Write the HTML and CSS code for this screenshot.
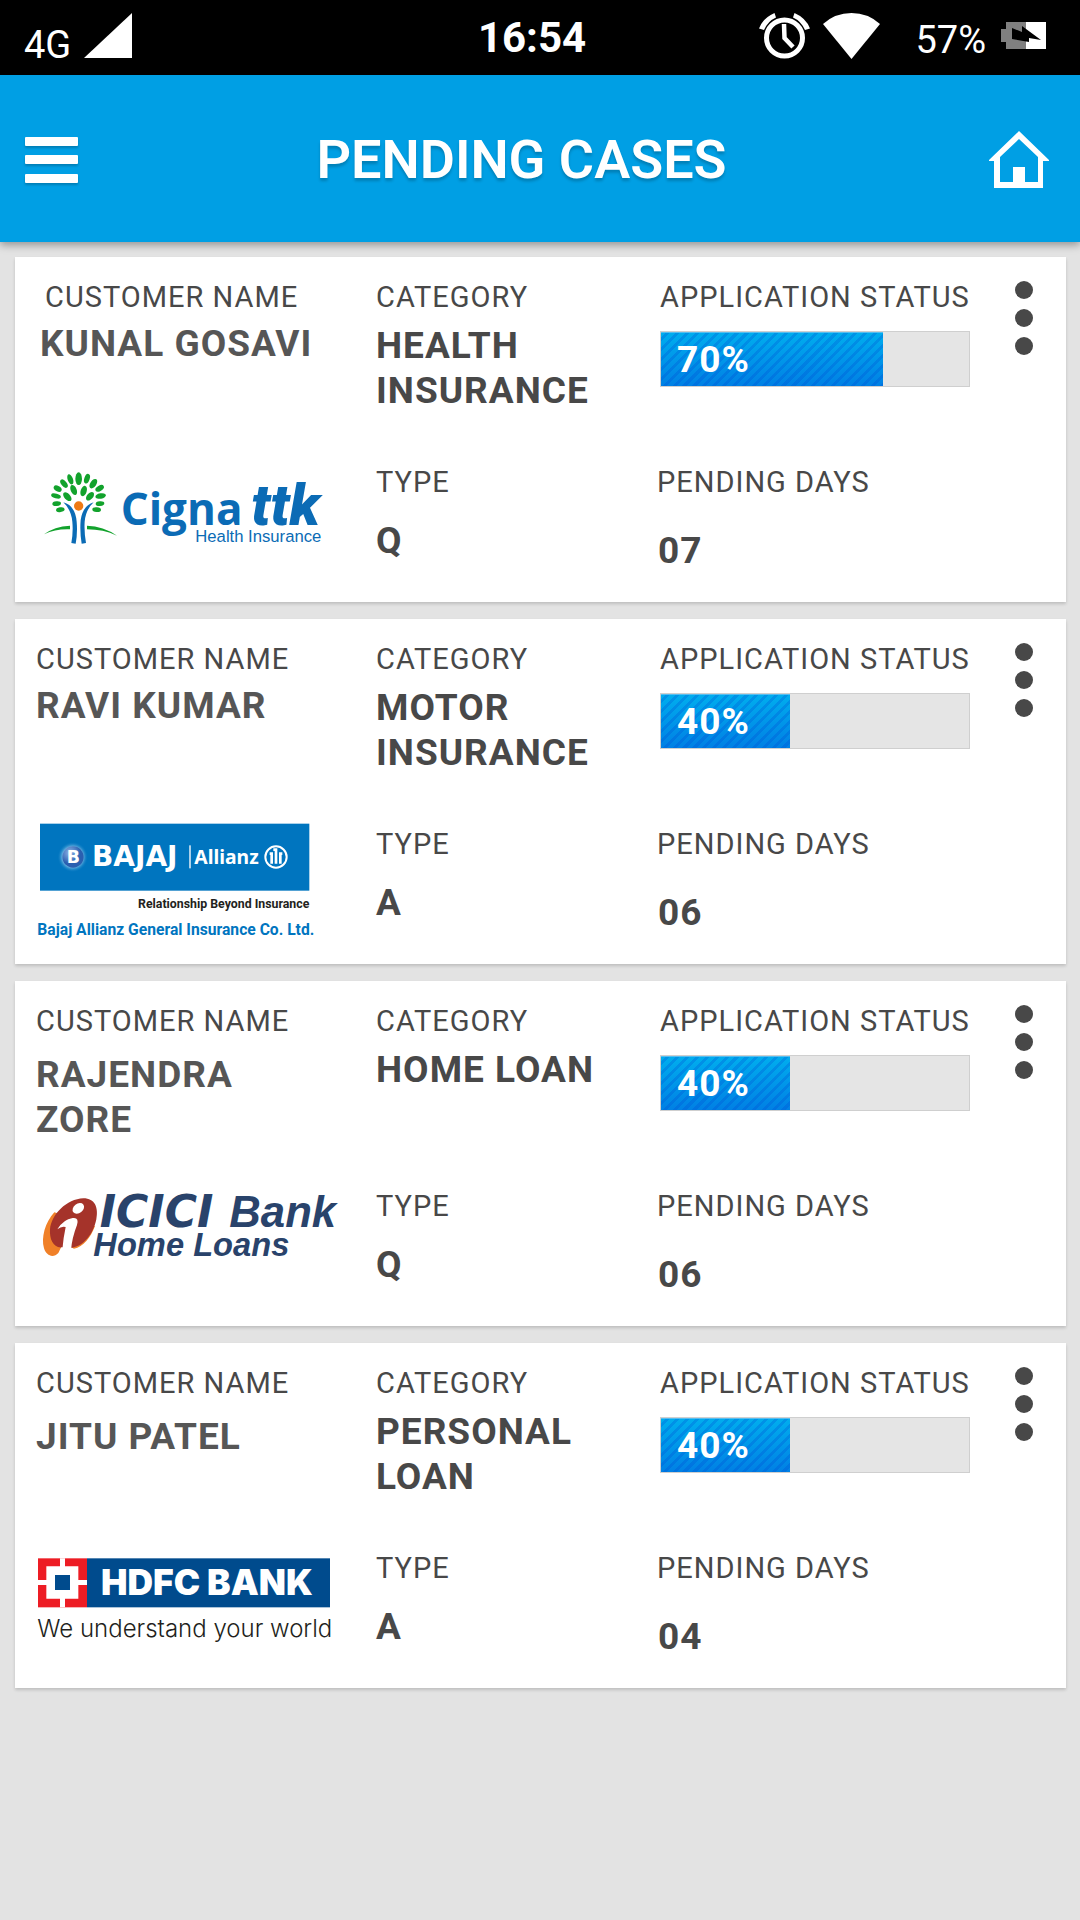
FILE: index.html
```html
<!DOCTYPE html>
<html lang="en">
<head>
<meta charset="utf-8">
<meta name="viewport" content="width=device-width, initial-scale=1">
<title>Pending Cases</title>
<link rel="stylesheet" href="styles.css">
</head>
<body>
<div class="status-bar">
  <div class="status-left">
    <span>4G</span>
    <svg width="48" height="45" viewBox="0 0 48 45" aria-hidden="true"><path d="M0 45L48 0V45z" fill="#fff"/></svg>
  </div>
  <span class="clock">16:54</span>
  <div class="status-right">
    <svg width="51" height="46" viewBox="0 0 51 46" aria-hidden="true">
      <circle cx="25.500" cy="25" r="18" fill="none" stroke="#fff" stroke-width="5"/>
      <path d="M25 11L25.500 25L34 34" fill="none" stroke="#fff" stroke-width="4.500"/>
      <path d="M15.500 0L17 4.500Q9 8 5 17L0 15.500Q4 5 15.500 0zM35.500 0L34 4.500Q42 8 46 17L51 15.500Q47 5 35.500 0z" fill="#fff"/>
    </svg>
    <svg width="57" height="46" viewBox="0 0 57 46" aria-hidden="true"><path d="M0 11Q12 0 28.500 0T57 11L28.500 46z" fill="#fff"/></svg>
    <span class="battery-level">57%</span>
    <svg class="battery" width="45" height="27" viewBox="0 0 45 27" aria-hidden="true">
      <path d="M5 0H25V27H5V20H0V7H5z" fill="#808080"/>
      <path d="M25 0H45V27H25z" fill="#fff"/>
      <path d="M11 6L21 10V4L40 18L28 16V20L11 17z" fill="#000"/>
    </svg>
  </div>
</div>

<header class="app-header">
  <button class="icon-button" type="button" aria-label="Menu">
    <svg class="raised" width="53" height="46" viewBox="0 0 53 46" fill="#fff"><rect width="53" height="9" rx="1"/><rect y="18" width="53" height="9" rx="1"/><rect y="37" width="53" height="9" rx="1"/></svg>
  </button>
  <h1 class="title">PENDING CASES</h1>
  <a class="icon-button" href="#home" aria-label="Home">
    <svg width="60" height="57" viewBox="0 0 60 57"><path d="M30 0L60 29V30H54V57H5V30H0V29zM30 8L11 26V51H24V36H36V51H49V26z" fill="#fff" fill-rule="evenodd"/></svg>
  </a>
</header>

<main class="cases">
  <article class="card">
    <div class="column customer customer-inset">
      <div>
        <h2 class="label">CUSTOMER NAME</h2>
        <p class="value name">KUNAL GOSAVI</p>
      </div>
      <svg class="logo" viewBox="105 609 930 360" role="img" aria-label="Cigna TTK Health Insurance">
        <g fill="#12a22c">
          <ellipse cx="236" cy="686" rx="10" ry="19"/>
          <ellipse cx="211" cy="688" rx="8" ry="16" transform="rotate(-20 211 688)"/>
          <ellipse cx="261" cy="686" rx="8" ry="15" transform="rotate(18 261 686)"/>
          <ellipse cx="192" cy="701" rx="8" ry="15" transform="rotate(-38 192 701)"/>
          <ellipse cx="280" cy="701" rx="9" ry="16" transform="rotate(35 280 701)"/>
          <ellipse cx="173" cy="716" rx="8" ry="13" transform="rotate(-60 173 716)"/>
          <ellipse cx="299" cy="715" rx="8" ry="14" transform="rotate(60 299 715)"/>
          <ellipse cx="221" cy="720" rx="9" ry="16" transform="rotate(-22 221 720)"/>
          <ellipse cx="251" cy="723" rx="9" ry="16" transform="rotate(18 251 723)"/>
          <ellipse cx="202" cy="740" rx="9" ry="16" transform="rotate(-42 202 740)"/>
          <ellipse cx="270" cy="739" rx="9" ry="15" transform="rotate(42 270 739)"/>
          <ellipse cx="168" cy="738" rx="7" ry="15" transform="rotate(-75 168 738)"/>
          <ellipse cx="302" cy="738" rx="8" ry="16" transform="rotate(80 302 738)"/>
          <ellipse cx="170" cy="761" rx="7" ry="13" transform="rotate(-95 170 761)"/>
          <ellipse cx="300" cy="761" rx="7" ry="13" transform="rotate(85 300 761)"/>
          <ellipse cx="181" cy="779" rx="7" ry="13" transform="rotate(-100 181 779)"/>
          <ellipse cx="290" cy="779" rx="7" ry="13" transform="rotate(95 290 779)"/>
          <path d="M132 853Q163 829 210 827V838Q168 836 132 853zM261 827Q310 828 351 857Q310 838 261 838z"/>
        </g>
        <circle cx="236" cy="768" r="14" fill="#ee7a13"/>
        <path d="M190 757Q226 767 230 815Q233 850 227 881L214 879Q220 846 217 815Q214 780 190 757zM281 757Q248 767 242 810Q239 845 245 881L258 879Q252 845 254 815Q257 779 281 757z" fill="#0b6bb5"/>
        <g fill="#0b6bb5">
          <text class="cigna-word" x="362" y="825">Cigna</text>
          <text class="cigna-mark" x="754" y="825">ttk</text>
          <text class="cigna-sub" x="586" y="877">Health Insurance</text>
        </g>
      </svg>
    </div>
    <div class="column">
      <div class="top">
        <h3 class="label">CATEGORY</h3>
        <p class="value">HEALTH INSURANCE</p>
      </div>
      <h3 class="label">TYPE</h3>
      <p class="value type">Q</p>
    </div>
    <div class="column">
      <div class="top status">
        <h3 class="label">APPLICATION STATUS</h3>
        <div class="progress" role="progressbar" aria-label="Application status" aria-valuenow="70" aria-valuemin="0" aria-valuemax="100"><div class="fill" style="width:72%">70%</div></div>
      </div>
      <h3 class="label">PENDING DAYS</h3>
      <p class="value days">07</p>
    </div>
    <button class="more" type="button" aria-label="More options"><span class="dot"></span><span class="dot"></span><span class="dot"></span></button>
  </article>

  <article class="card">
    <div class="column customer">
      <div>
        <h2 class="label">CUSTOMER NAME</h2>
        <p class="value name">RAVI KUMAR</p>
      </div>
      <svg class="logo" viewBox="105 42 930 360" role="img" aria-label="Bajaj Allianz">
        <defs>
          <radialGradient id="glow"><stop offset=".6" stop-color="#9fd0f0"/><stop offset="1" stop-color="#0075bf" stop-opacity="0"/></radialGradient>
          <radialGradient id="ball" cx=".35" cy=".3"><stop offset="0" stop-color="#8fb4e6"/><stop offset="1" stop-color="#2a5fb0"/></radialGradient>
        </defs>
        <rect x="120" y="68" width="808" height="201" fill="#0075bf"/>
        <circle cx="218" cy="168" r="46" fill="url(#glow)"/>
        <circle cx="219" cy="168" r="32" fill="url(#ball)"/>
        <g fill="#fff">
          <text class="bajaj-ball" x="200" y="187">B</text>
          <text class="bajaj-word" x="276" y="194">BAJAJ</text>
          <rect x="568" y="133" width="4" height="69"/>
          <text class="allianz-word" x="583" y="188">Allianz</text>
        </g>
        <circle cx="828" cy="168" r="32" fill="none" stroke="#fff" stroke-width="6"/>
        <path d="M815 188V158H809M828 188V146H820M841 188V158H847" fill="none" stroke="#fff" stroke-width="8"/>
        <text class="bajaj-tag" x="928" y="322" fill="#231f20">Relationship Beyond Insurance</text>
        <text class="bajaj-co" x="112" y="402" fill="#0075bf">Bajaj Allianz General Insurance Co. Ltd.</text>
      </svg>
    </div>
    <div class="column">
      <div class="top">
        <h3 class="label">CATEGORY</h3>
        <p class="value">MOTOR INSURANCE</p>
      </div>
      <h3 class="label">TYPE</h3>
      <p class="value type">A</p>
    </div>
    <div class="column">
      <div class="top status">
        <h3 class="label">APPLICATION STATUS</h3>
        <div class="progress" role="progressbar" aria-label="Application status" aria-valuenow="40" aria-valuemin="0" aria-valuemax="100"><div class="fill" style="width:42%">40%</div></div>
      </div>
      <h3 class="label">PENDING DAYS</h3>
      <p class="value days">06</p>
    </div>
    <button class="more" type="button" aria-label="More options"><span class="dot"></span><span class="dot"></span><span class="dot"></span></button>
  </article>

  <article class="card">
    <div class="column customer customer-loan">
      <div>
        <h2 class="label">CUSTOMER NAME</h2>
        <p class="value name">RAJENDRA ZORE</p>
      </div>
      <svg class="logo" viewBox="105 618 930 360" role="img" aria-label="ICICI Bank Home Loans">
        <path d="M163 724C135 755 123 800 132 832C139 855 160 862 175 846L190 815L222 833C250 828 272 800 285 765z" fill="#f08028"/>
        <path d="M250 682C285 682 296 710 289 745C280 790 250 826 216 830L186 829C160 832 148 805 150 775C154 730 200 684 250 682z" fill="#a5332a"/>
        <ellipse cx="235" cy="712" rx="19" ry="14" transform="rotate(-38 235 712)" fill="#fff"/>
        <path d="M172 775Q190 745 218 741Q238 738 231 762Q216 800 213 838Q200 846 187 836Q190 800 197 768Q185 764 172 775z" fill="#fff"/>
        <g fill="#29436b">
          <text class="icici-word" x="299" y="768">ICICI</text>
          <text class="bank-word" x="688" y="768">Bank</text>
          <text class="loans-word" x="280" y="856">Home Loans</text>
        </g>
      </svg>
    </div>
    <div class="column">
      <div class="top">
        <h3 class="label">CATEGORY</h3>
        <p class="value">HOME LOAN</p>
      </div>
      <h3 class="label">TYPE</h3>
      <p class="value type">Q</p>
    </div>
    <div class="column">
      <div class="top status">
        <h3 class="label">APPLICATION STATUS</h3>
        <div class="progress" role="progressbar" aria-label="Application status" aria-valuenow="40" aria-valuemin="0" aria-valuemax="100"><div class="fill" style="width:42%">40%</div></div>
      </div>
      <h3 class="label">PENDING DAYS</h3>
      <p class="value days">06</p>
    </div>
    <button class="more" type="button" aria-label="More options"><span class="dot"></span><span class="dot"></span><span class="dot"></span></button>
  </article>

  <article class="card">
    <div class="column customer customer-loan">
      <div>
        <h2 class="label">CUSTOMER NAME</h2>
        <p class="value name">JITU PATEL</p>
      </div>
      <svg class="logo" viewBox="105 594 930 360" role="img" aria-label="HDFC Bank">
        <rect x="114" y="652" width="147" height="147" fill="#ed1c24"/>
        <path d="M180 652H195V676H235V717H261V732H235V773H195V799H180V773H139V732H114V717H139V676H180z" fill="#fff"/>
        <rect x="165" y="702" width="45" height="45" fill="#004b8d"/>
        <rect x="261" y="652" width="729" height="147" fill="#004b8d"/>
        <text class="hdfc-word" x="303" y="762" fill="#fff">HDFC BANK</text>
        <text class="hdfc-tag" x="112" y="887" fill="#231f20">We understand your world</text>
      </svg>
    </div>
    <div class="column">
      <div class="top">
        <h3 class="label">CATEGORY</h3>
        <p class="value">PERSONAL LOAN</p>
      </div>
      <h3 class="label">TYPE</h3>
      <p class="value type">A</p>
    </div>
    <div class="column">
      <div class="top status">
        <h3 class="label">APPLICATION STATUS</h3>
        <div class="progress" role="progressbar" aria-label="Application status" aria-valuenow="40" aria-valuemin="0" aria-valuemax="100"><div class="fill" style="width:42%">40%</div></div>
      </div>
      <h3 class="label">PENDING DAYS</h3>
      <p class="value days">04</p>
    </div>
    <button class="more" type="button" aria-label="More options"><span class="dot"></span><span class="dot"></span><span class="dot"></span></button>
  </article>
</main>
</body>
</html>
```
FILE: styles.css
```css
* {
  box-sizing: border-box;
}

body {
  margin: 0;
  min-height: 100vh;
  background: #e3e3e3;
  color: #484848;
  font-family: Roboto, "Liberation Sans", sans-serif;
}

h1, h2, h3, p {
  margin: 0;
}

/* Phone status bar */
.status-bar {
  display: grid;
  grid-template-columns: 1fr auto 1fr;
  align-items: center;
  height: 75px;
  padding: 0 34px 0 24px;
  background: #000;
  color: #fff;
  font-size: 38px;
  line-height: 45px;
}

.status-left {
  display: flex;
  align-items: baseline;
  gap: 13px;
  padding-top: 5px;
}

.clock {
  padding-right: 6px;
  font-size: 42px;
  font-weight: 700;
}

.status-right {
  display: flex;
  align-items: flex-start;
  justify-content: flex-end;
  gap: 13px;
}

.battery-level {
  padding: 5px 2px 0 22px;
}

.battery {
  margin-top: 9px;
}

/* App header */
.app-header {
  position: relative;
  display: flex;
  align-items: center;
  height: 167px;
  padding: 2px 31px 0 25px;
  background: #009fe4;
  color: #fff;
  box-shadow: 0 3px 8px rgba(0, 0, 0, .35);
}

.title {
  flex: 1;
  padding-right: 24px;
  font-size: 54px;
  font-weight: 600;
  line-height: 64px;
  text-align: center;
  text-shadow: 0 3px 3px rgba(0, 0, 0, .2);
}

.icon-button {
  display: flex;
  padding: 0;
  border: 0;
  background: none;
}

.raised {
  filter: drop-shadow(0 2px 1px rgba(0, 0, 0, .2));
}

/* Case cards */
.cases {
  display: flex;
  flex-direction: column;
  gap: 17px;
  padding: 15px 14px 15px 15px;
}

.card {
  display: grid;
  grid-template-columns: 340fr 281fr 314fr 96px;
  padding: 24px 0 29px 20px;
  background: #fff;
  box-shadow: 0 2px 3px rgba(0, 0, 0, .16);
}

.column {
  min-width: 0;
}

.customer {
  display: flex;
  flex-direction: column;
  justify-content: space-between;
}

.top {
  min-height: 185px;
}

.label {
  padding-left: 1px;
  font-size: 29px;
  font-weight: 400;
  line-height: 32px;
  letter-spacing: 1px;
  white-space: nowrap;
}

.value {
  padding: 10px 0 0 1px;
  font-size: 37px;
  font-weight: 700;
  line-height: 45px;
  letter-spacing: 1px;
}

.name {
  max-width: 290px;
  padding-top: 8px;
  color: #565656;
}

.customer-loan .name {
  padding-top: 15px;
}

.customer-inset .label {
  padding-left: 10px;
}

.customer-inset .name {
  padding-left: 5px;
}

.type {
  padding-top: 20px;
}

.days {
  padding: 30px 0 0 2px;
}

.status {
  padding-left: 4px;
}

.status .label {
  padding-left: 0;
}

.progress {
  height: 56px;
  margin-top: 18px;
  border: 1px solid #cfcfcf;
  background: #e5e5e5;
}

.fill {
  height: 100%;
  padding-left: 16px;
  background:
    repeating-linear-gradient(135deg, transparent 0 4px, rgba(0, 70, 210, .25) 4px 7px),
    linear-gradient(#00aeee, #0080e4);
  box-shadow: inset 0 1px #55bdf0;
  color: #fff;
  font-size: 37px;
  font-weight: 700;
  line-height: 56px;
  letter-spacing: 1px;
}

.more {
  display: flex;
  flex-direction: column;
  align-items: center;
  align-self: start;
  gap: 10px;
  width: 40px;
  margin-left: 34px;
  padding: 0;
  border: 0;
  background: none;
}

.dot {
  width: 18px;
  height: 18px;
  border-radius: 50%;
  background: #484848;
}

/* Company logos */
.logo {
  display: block;
  width: 310px;
  max-width: 100%;
  overflow: visible;
}

.cigna-word {
  font: 700 132px "Open Sans", sans-serif;
}

.cigna-mark {
  font: italic 900 172px Roboto, sans-serif;
}

.cigna-sub {
  font: 400 50px "Liberation Sans", sans-serif;
}

.bajaj-ball {
  font: 700 52px "DejaVu Sans", sans-serif;
}

.bajaj-word {
  font: 700 84px "DejaVu Sans", sans-serif;
}

.allianz-word {
  font: 700 58px "Noto Sans", sans-serif;
}

.bajaj-tag {
  font: 700 37px Roboto, sans-serif;
  text-anchor: end;
}

.bajaj-co {
  font: 700 47px Roboto, sans-serif;
}

.icici-word {
  font: italic 700 132px "DejaVu Sans", sans-serif;
}

.bank-word {
  font: italic 700 131px "Liberation Sans", sans-serif;
}

.loans-word {
  font: italic 700 98px "Liberation Sans", sans-serif;
}

.hdfc-word {
  font: 900 106px Inter, sans-serif;
}

.hdfc-tag {
  font: 300 72px Inter, sans-serif;
}
```
